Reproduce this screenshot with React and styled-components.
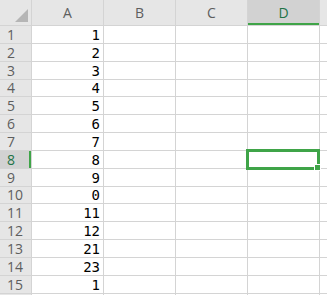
import React from "react";
import styled, { createGlobalStyle } from "styled-components";

const GlobalStyle = createGlobalStyle`
  html, body {
    margin: 0;
    padding: 0;
    background: #ffffff;
    overflow: hidden;
  }
`;

const Sheet = styled.div`
  display: grid;
  grid-template-columns: 31px 71px 71px 71px 71px 8px;
  grid-template-rows: 25px;
  grid-auto-rows: 16.85px;
  gap: 1px;
  background: #d4d4d4;
  width: 327px;
  height: 295px;
  overflow: hidden;
  position: relative;
`;

const Corner = styled.div`
  background: #e6e6e6;
  position: relative;
  &::after {
    content: "";
    position: absolute;
    right: 3px;
    bottom: 3px;
    width: 0;
    height: 0;
    border-left: 13px solid transparent;
    border-bottom: 13px solid #b5b5b5;
  }
`;

const ColHead = styled.div`
  background: ${(p) => (p.$active ? "#d2d2d2" : "#e6e6e6")};
  color: ${(p) => (p.$active ? "#217346" : "#5e5e5e")};
  font-family: "Open Sans", "Liberation Sans", sans-serif;
  font-size: 14px;
  display: flex;
  align-items: center;
  justify-content: center;
  box-shadow: ${(p) => (p.$active ? "inset 0 -2px 0 #3fa448" : "none")};
`;

const RowHead = styled.div`
  background: ${(p) => (p.$active ? "#d2d2d2" : "#e6e6e6")};
  color: ${(p) => (p.$active ? "#217346" : "#5e5e5e")};
  font-family: "Open Sans", "Liberation Sans", sans-serif;
  font-size: 14px;
  line-height: 16px;
  display: flex;
  align-items: flex-end;
  padding-left: 7px;
  box-shadow: ${(p) => (p.$active ? "inset -2px 0 0 #3fa448" : "none")};
`;

const Cell = styled.div`
  background: #ffffff;
  font-family: "DejaVu Sans Mono", "Liberation Mono", monospace;
  font-size: 14px;
  line-height: 16px;
  color: #000000;
  display: flex;
  align-items: flex-end;
  justify-content: flex-end;
  padding-right: 3px;
  position: relative;
`;

const Selection = styled.div`
  position: absolute;
  top: -2px;
  left: -2px;
  right: -1px;
  bottom: -2px;
  border: 3px solid #3fa448;
  z-index: 2;
  &::after {
    content: "";
    position: absolute;
    right: -4px;
    bottom: -4px;
    width: 5px;
    height: 5px;
    background: #3fa448;
    border: 1px solid #ffffff;
  }
`;

const values = ["1", "2", "3", "4", "5", "6", "7", "8", "9", "0", "11", "12", "21", "23", "1", ""];
const cols = ["A", "B", "C", "D"];

export default function App() {
  return (
    <>
      <GlobalStyle />
      <Sheet>
        <Corner />
        {cols.map((c) => (
          <ColHead key={c} $active={c === "D"}>
            {c}
          </ColHead>
        ))}
        <ColHead />
        {values.map((v, i) => (
          <React.Fragment key={i}>
            <RowHead $active={i === 7}>{i + 1}</RowHead>
            <Cell>{v}</Cell>
            <Cell />
            <Cell />
            <Cell>{i === 7 && <Selection />}</Cell>
            <Cell />
          </React.Fragment>
        ))}
      </Sheet>
    </>
  );
}
